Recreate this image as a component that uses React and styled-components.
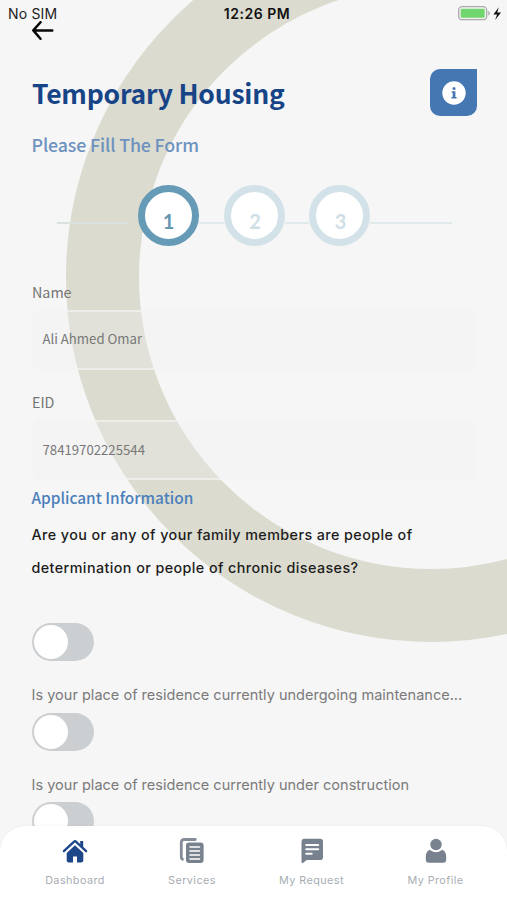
import React from "react";
import styled, { createGlobalStyle } from "styled-components";

const SOURCE = `"Noto Sans CJK SC", "Noto Sans", sans-serif`;
const SYSTEM = `Inter, "Liberation Sans", sans-serif`;

const GlobalStyle = createGlobalStyle`
  * { box-sizing: border-box; }
  body { margin: 0; background: #f6f6f6; }
`;

const Screen = styled.div`
  position: relative;
  display: flex;
  flex-direction: column;
  width: 507px;
  height: 900px;
  overflow: hidden;
  background: #f6f6f6;
  font-family: ${SYSTEM};
`;

const Ring = styled.div`
  position: absolute;
  left: 66px;
  top: -88px;
  width: 730px;
  height: 730px;
  border: 73px solid #dbdbcf;
  border-radius: 50%;
`;

const StatusBar = styled.header`
  position: relative;
  display: grid;
  grid-template-columns: 1fr auto 1fr;
  align-items: center;
  height: 21px;
  padding: 6px 5px 1px 8px;
  line-height: 14px;
  font-size: 14px;
  color: #222;
`;

const Carrier = styled.span`
  letter-spacing: 0.17px;
`;

const Clock = styled.span`
  font-weight: 600;
  font-size: 14px;
  letter-spacing: 0.5px;
  color: #111;
  margin-left: 4px;
`;

const Power = styled.span`
  display: flex;
  justify-content: flex-end;
  svg { display: block; }
`;

const Content = styled.main`
  position: relative;
  display: flex;
  flex-direction: column;
  flex: 1;
  min-height: 0;
  overflow: hidden;
  padding: 0 30px 0 32px;
`;

const BackButton = styled.button`
  display: block;
  width: 22px;
  height: 20px;
  padding: 0;
  border: 0;
  background: none;
  flex: none;
  svg { display: block; }
`;

const TitleRow = styled.div`
  display: flex;
  justify-content: space-between;
  align-items: center;
  flex: none;
  height: 47px;
  margin-top: 28px;
`;

const Title = styled.h1`
  margin: 0;
  font: 700 26.5px/40px ${SOURCE};
  letter-spacing: -0.2px;
  color: #174486;
  white-space: nowrap;
`;

const InfoButton = styled.button`
  display: grid;
  place-items: center;
  width: 47px;
  height: 47px;
  padding: 0;
  border: 0;
  border-radius: 10px 0 10px 10px;
  background: #4577b3;
`;

const Subtitle = styled.h2`
  flex: none;
  margin: 14px 0 0 -0.5px;
  font: 500 17.8px/28px ${SOURCE};
  letter-spacing: -0.13px;
  color: #6e92bf;
  white-space: nowrap;
`;

const Stepper = styled.div`
  display: flex;
  align-items: center;
  flex: none;
  height: 61px;
  margin: 27px 0 0 25px;
`;

const Step = styled.div`
  display: flex;
  justify-content: center;
  flex: none;
  width: 61px;
  height: 61px;
  padding: 17px 0 0 ${(p) => (p.$active ? 0 : 2)}px;
  border: 7px solid ${(p) => (p.$active ? "#659bb6" : "#d2e2e8")};
  border-radius: 50%;
  background: #fff;
  font: 700 20px/24px Lato, sans-serif;
  color: ${(p) => (p.$active ? "#6797af" : "#cfdfe5")};
`;

const Connector = styled.div`
  flex: none;
  width: ${(p) => p.$width}px;
  height: 2px;
  margin: 14px ${(p) => p.$gap || 0}px 0 0;
  background: ${(p) => (p.$gap ? "#dbe1df" : "#e0eaec")};
`;

const Field = styled.label`
  display: block;
  flex: none;
  height: 110.5px;
  padding-top: 33.500px;
`;

const FieldLabel = styled.span`
  display: block;
  font: 400 14.3px/24px ${SOURCE};
  color: #747474;
`;

const FieldBox = styled.span`
  display: flex;
  align-items: center;
  height: 60px;
  margin: 6px 0 0;
  padding: 0 0 1px 8.500px;
  border: 2px solid rgba(243, 243, 243, 0.75);
  border-radius: 8px;
  background: rgba(239, 239, 242, 0.3);
  background-clip: padding-box;
  font: 400 13.2px/20px ${SOURCE};
  color: #777;
`;

const SectionTitle = styled.h3`
  flex: none;
  margin: 18px 0 0 -0.5px;
  font: 500 15.4px/24px ${SOURCE};
  color: #4a7fba;
`;

const Question = styled.p`
  flex: none;
  margin: ${(p) => p.$top}px 0 0 -0.5px;
  font-size: ${(p) => (p.$strong ? 14.3 : 14.5)}px;
  font-weight: ${(p) => (p.$strong ? 500 : 400)};
  line-height: ${(p) => (p.$strong ? 32.5 : 20)}px;
  letter-spacing: ${(p) => (p.$strong ? 0.43 : 0.02)}px;
  color: ${(p) => (p.$strong ? "#1c1c1c" : "#7a7a7a")};
  white-space: nowrap;
`;

const Toggle = styled.span`
  display: flex;
  align-items: center;
  flex: none;
  width: 62px;
  height: 38px;
  margin-top: ${(p) => p.$top}px;
  padding: 2px;
  border-radius: 19px;
  background: #cccfd2;
  &::before {
    content: "";
    width: 34px;
    height: 34px;
    border-radius: 50%;
    background: #fff;
  }
`;

const NavBar = styled.nav`
  position: relative;
  display: flex;
  flex: none;
  height: 74px;
  margin-top: -26px;
  border-radius: 25px 25px 0 0;
  background: #fff;
  box-shadow: 0 0 2px rgba(0, 0, 0, 0.08);
`;

const NavItem = styled.div`
  display: flex;
  flex-direction: column;
  align-items: center;
  width: 100px;
  margin-left: ${(p) => p.$offset}px;
  padding-top: 12px;
  font-size: 10.8px;
  line-height: 14px;
  letter-spacing: 0.45px;
  color: #a8adb4;
  white-space: nowrap;
  svg { display: block; margin-bottom: 10px; }
`;

const BackIcon = () => (
  <svg width="22" height="20" viewBox="0 0 22 20" fill="none" stroke="#080808" strokeWidth="2.5" strokeLinecap="round" strokeLinejoin="round">
    <path d="M20.3 9.4H1.5M8.5 1.2 1.3 9.4 8.5 17.8" />
  </svg>
);

const BatteryIcon = () => (
  <svg width="44" height="16" viewBox="0 0 44 16">
    <rect x=".7" y=".7" width="28" height="13" rx="3.5" fill="#f4f4f4" stroke="#ababab" strokeWidth="1.3" />
    <rect x="2.7" y="2.7" width="24" height="9" rx="1.2" fill="#71d66d" />
    <path d="M30.3 4.8c2 1 2 4 0 5z" fill="#a6a6a6" />
    <path d="M40.8 1.2 35.4 8.6h3.7l-2 5.5L43 6.5h-3.8z" fill="#111" />
  </svg>
);

const InfoIcon = () => (
  <svg width="24" height="24" viewBox="0 0 24 24">
    <circle cx="12" cy="12" r="11.7" fill="#fff" />
    <circle cx="12" cy="7.5" r="1.5" fill="#4577b3" />
    <path d="M9.7 10.2h3.7v5.9h1.2v1.5H9.5v-1.5h1.2v-4.4h-1z" fill="#4577b3" />
  </svg>
);

const HomeIcon = () => (
  <svg width="26" height="26" viewBox="0 0 26 26">
    <path d="M1.9 13.2 11.8 3.9a1.7 1.7 0 0 1 2.4 0l9.9 9.3" fill="none" stroke="#1d4788" strokeWidth="2.3" strokeLinecap="round" />
    <path d="M18.2 3.1h3v6.8l-3-2.8z" fill="#1d4788" />
    <path d="m13 7.3 8.3 7.8v7.5a1.8 1.8 0 0 1-1.8 1.8H15v-5.8h-4v5.8H6.5a1.8 1.8 0 0 1-1.8-1.8v-7.5z" fill="#1d4788" />
  </svg>
);

const ServicesIcon = () => (
  <svg width="26" height="26" viewBox="0 0 26 26">
    <path d="M3.5 21.3A2.6 2.6 0 0 1 2.3 18.6V4.2A3 3 0 0 1 5.3 1.5h11" fill="none" stroke="#858d98" strokeWidth="2.8" strokeLinecap="round" />
    <rect x="7" y="4.5" width="17.6" height="20.5" rx="3" fill="#78818e" />
    <path d="M11 9h9.5M11 13h9.5M11 17h9.5M11 21h9.5" stroke="#fff" strokeWidth="1.5" strokeLinecap="round" />
  </svg>
);

const RequestIcon = () => (
  <svg width="26" height="26" viewBox="0 0 26 26">
    <path d="M5 .7h16.2a2.8 2.8 0 0 1 2.8 2.8v15.8a2.8 2.8 0 0 1-2.8 2.8H7.8l-3.6 2.7c-.8.6-1.7.2-1.7-.8V3.5A2.8 2.8 0 0 1 5 .7z" fill="#78818e" />
    <path d="M7.2 6.9h12M7.2 11.3h12M7.2 15.7h5.5" stroke="#fff" strokeWidth="2" strokeLinecap="round" />
  </svg>
);

const ProfileIcon = () => (
  <svg width="26" height="26" viewBox="0 0 26 26">
    <circle cx="13" cy="6.5" r="5.7" fill="#78818e" />
    <path d="M6.8 11.8c3.6 3.2 8.8 3.2 12.4 0 2.5 1 4 3.5 4 7v2.9a3 3 0 0 1-3 3H5.8a3 3 0 0 1-3-3v-2.9c0-3.5 1.500-6 4-7z" fill="#78818e" />
  </svg>
);

export default function App() {
  return (
    <>
      <GlobalStyle />
      <Screen>
        <Ring />
        <StatusBar>
          <Carrier>No SIM</Carrier>
          <Clock>12:26 PM</Clock>
          <Power><BatteryIcon /></Power>
        </StatusBar>
        <Content>
          <BackButton aria-label="Back"><BackIcon /></BackButton>
          <TitleRow>
            <Title>Temporary Housing</Title>
            <InfoButton aria-label="Information"><InfoIcon /></InfoButton>
          </TitleRow>
          <Subtitle>Please Fill The Form</Subtitle>
          <Stepper>
            <Connector $width={71} $gap={10} />
            <Step $active>1</Step>
            <Connector $width={24.5} />
            <Step>2</Step>
            <Connector $width={24.5} />
            <Step>3</Step>
            <Connector $width={82} />
          </Stepper>
          <Field>
            <FieldLabel>Name</FieldLabel>
            <FieldBox>Ali Ahmed Omar</FieldBox>
          </Field>
          <Field>
            <FieldLabel>EID</FieldLabel>
            <FieldBox>78419702225544</FieldBox>
          </Field>
          <SectionTitle>Applicant Information</SectionTitle>
          <Question $strong $top={10}>
            Are you or any of your family members are people of
            <br />
            determination or people of chronic diseases?
          </Question>
          <Toggle $top={39} />
          <Question $top={24}>Is your place of residence currently undergoing maintenance...</Question>
          <Toggle $top={7.5} />
          <Question $top={24}>Is your place of residence currently under construction</Question>
          <Toggle $top={7.5} />
        </Content>
        <NavBar>
          <NavItem $offset={25}><HomeIcon />Dashboard</NavItem>
          <NavItem $offset={17}><ServicesIcon />Services</NavItem>
          <NavItem $offset={19.5}><RequestIcon />My Request</NavItem>
          <NavItem $offset={24}><ProfileIcon />My Profile</NavItem>
        </NavBar>
      </Screen>
    </>
  );
}
